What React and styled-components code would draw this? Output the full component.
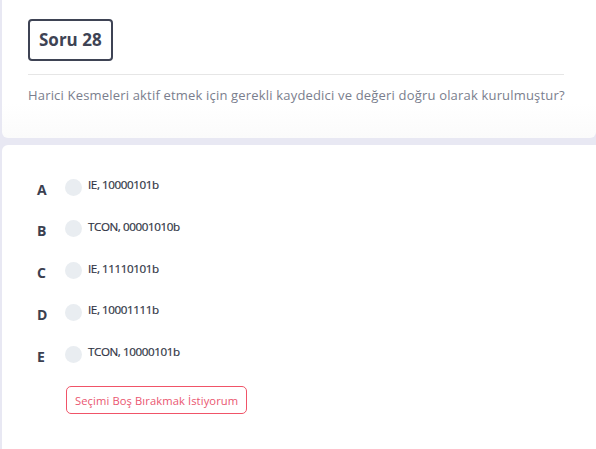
import React from "react";
import styled, { createGlobalStyle } from "styled-components";

const GlobalStyle = createGlobalStyle`
    html, body {
        margin: 0;
        padding: 0;
        background: #e8e8f3;
        font-family: "Open Sans", "Noto Sans", sans-serif;
    }
`;

const Page = styled.div`
    width: 596px;
    height: 449px;
    padding-left: 2px;
    box-sizing: border-box;
    display: flex;
    flex-direction: column;
    gap: 7px;
    overflow: hidden;
`;

const Card = styled.section`
    flex-shrink: 0;
    display: flex;
    flex-direction: column;
    align-items: flex-start;
    background: ${(props) => props.$fade ? "linear-gradient(#ffffff 75%, #fbfbfb)" : "#ffffff"};
    border-radius: ${(props) => props.$radius};
    padding: ${(props) => props.$padding};
    box-sizing: border-box;
    height: ${(props) => props.$height};
`;

const Title = styled.h2`
    margin: 0;
    padding: 0 9px;
    height: 42px;
    line-height: 38px;
    box-sizing: border-box;
    border: 2px solid #3e4354;
    border-radius: 4px;
    font-size: 17px;
    font-weight: 700;
    color: #3e4354;
`;

const Divider = styled.hr`
    align-self: stretch;
    border: 0;
    border-top: 1px solid #e6e6e6;
    margin: 13px 32px 0 0;
`;

const Question = styled.p`
    margin: 11px 0 0;
    font-size: 13px;
    color: #7a7e8d;
    letter-spacing: 0.18px;
    white-space: nowrap;
`;

const Options = styled.div`
    display: flex;
    flex-direction: column;
    gap: 19.75px;
`;

const Option = styled.label`
    display: flex;
    align-items: center;
    height: 22px;
`;

const Letter = styled.span`
    width: 28px;
    font-size: 14px;
    font-weight: 700;
    color: #3b4050;
    padding-top: 4px;
`;

const Radio = styled.span`
    width: 17px;
    height: 17px;
    border-radius: 50%;
    background: #e9edf1;
    margin-right: 6px;
`;

const OptionText = styled.span`
    font-size: 11.6px;
    font-weight: 400;
    color: #2f3444;
    letter-spacing: -0.4px;
    margin-top: -5px;
    -webkit-text-stroke: 0.2px #2f3444;
`;

const SkipButton = styled.button`
    margin: 21px 0 0 29px;
    height: 28px;
    padding: 0 8px;
    background: #ffffff;
    border: 1px solid #f05468;
    border-radius: 5px;
    font-family: inherit;
    font-size: 11.2px;
    color: #ea5670;
    letter-spacing: 0.1px;
`;

const options = [
    ["A", "IE, 10000101b"],
    ["B", "TCON, 00001010b"],
    ["C", "IE, 11110101b"],
    ["D", "IE, 10001111b"],
    ["E", "TCON, 10000101b"],
];

export default function App() {
    return (
        <>
            <GlobalStyle />
            <Page>
                <Card $fade $height="138px" $radius="0 0 6px 6px" $padding="19px 0 0 26px">
                    <Title>Soru 28</Title>
                    <Divider />
                    <Question>
                        Harici Kesmeleri aktif etmek için gerekli kaydedici ve değeri doğru olarak kurulmuştur?
                    </Question>
                </Card>
                <Card $height="320px" $radius="6px 0 0 0" $padding="31px 0 0 35px">
                    <Options>
                        {options.map(([letter, text]) => (
                            <Option key={letter}>
                                <Letter>{letter}</Letter>
                                <Radio />
                                <OptionText>{text}</OptionText>
                            </Option>
                        ))}
                    </Options>
                    <SkipButton>Seçimi Boş Bırakmak İstiyorum</SkipButton>
                </Card>
            </Page>
        </>
    );
}
